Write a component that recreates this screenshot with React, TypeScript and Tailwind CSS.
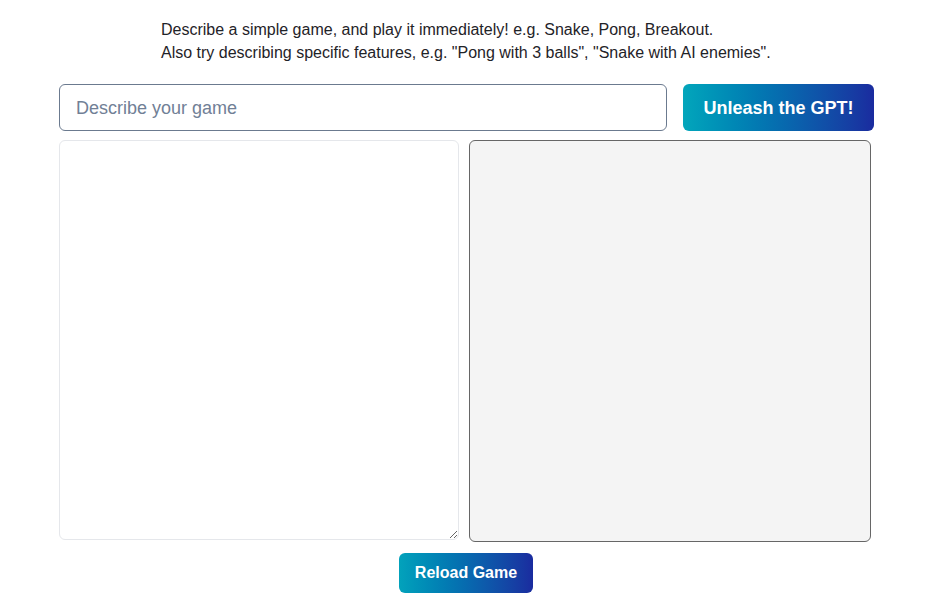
import { useState } from "react";

export default function App() {
  const [prompt, setPrompt] = useState("");
  return (
    <main className="min-h-screen bg-white font-['Liberation_Sans',Arial,sans-serif]">
      <div className="ml-[59px] w-[815px] pt-[18px]">
        <div className="pl-[102px] text-[16px] leading-[23px] text-[#1f2328]">
          <p>Describe a simple game, and play it immediately! e.g. Snake, Pong, Breakout.</p>
          <p>Also try describing specific features, e.g. "Pong with 3 balls", "Snake with AI enemies".</p>
        </div>
        <div className="mt-[20px] flex gap-4">
          <input
            value={prompt}
            onChange={(e) => setPrompt(e.target.value)}
            placeholder="Describe your game"
            className="h-[47px] w-[608px] rounded-md border border-[#6b7a8f] px-4 pt-[2px] text-[18px] text-gray-800 outline-none placeholder:text-[#718096]"
          />
          <button className="h-[47px] flex-1 rounded-md bg-gradient-to-r from-[#03a6bb] to-[#1a2b9f] pt-[2px] text-[18px] font-bold text-white">
            Unleash the GPT!
          </button>
        </div>
        <div className="mt-[9px] flex gap-[10px]">
          <textarea className="h-[400px] w-[400px] rounded-md border border-[#e5e7eb] p-2 text-sm outline-none" />
          <div className="h-[402px] w-[402px] rounded-md border border-[#666] bg-[#f4f4f4]" />
        </div>
        <div className="mt-[11px] flex">
          <button className="ml-[340px] h-[40px] w-[134px] rounded-md bg-gradient-to-r from-[#03a2bb] to-[#1a2b9f] text-[16px] font-bold text-white">
            Reload Game
          </button>
        </div>
      </div>
    </main>
  );
}
